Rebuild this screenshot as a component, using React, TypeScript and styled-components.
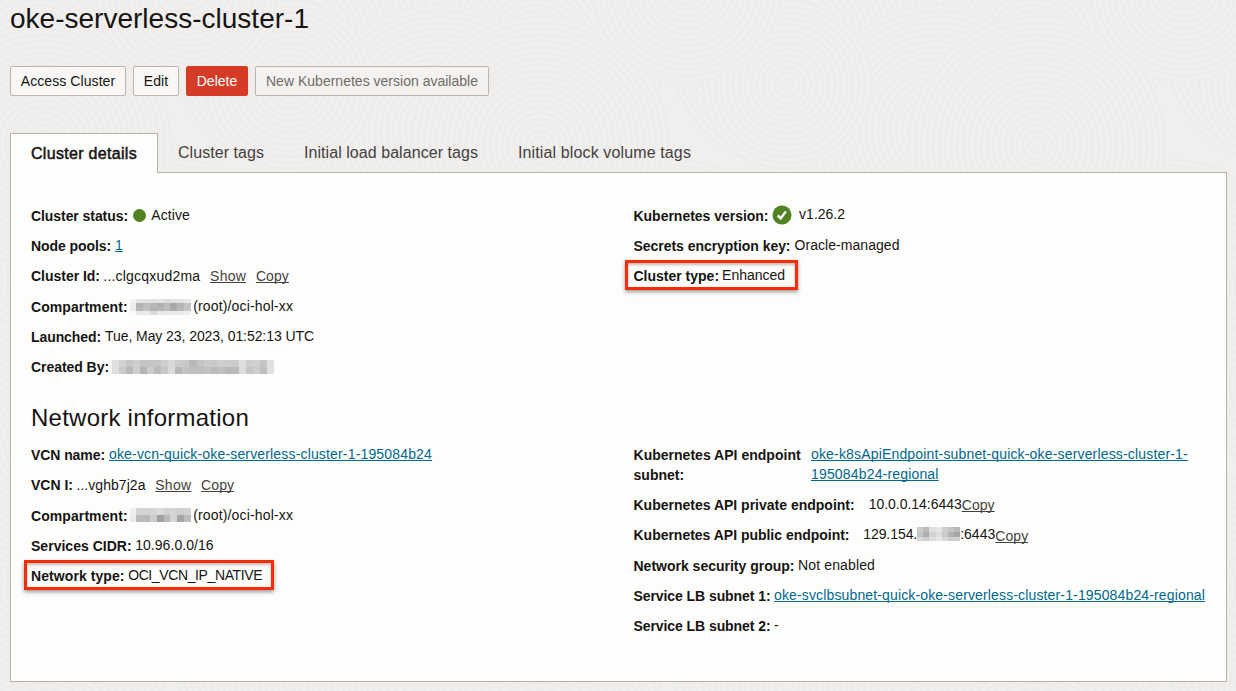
import React from 'react';
import styled, { createGlobalStyle } from 'styled-components';

const GlobalStyle = createGlobalStyle`
  * { box-sizing: border-box; }
  body {
    margin: 0;
    background: #f0efee;
    color: #161513;
    font-family: "Liberation Sans", Arial, Helvetica, sans-serif;
    font-size: 14px;
    line-height: 20px;
    overflow: hidden;
  }
`;

const Page = styled.main`
  position: relative;
  height: 691px;
  padding: 0 9px 0 10px;
  display: flex;
  flex-direction: column;
`;

const Backdrop = styled.svg`
  position: absolute;
  inset: 0;
  z-index: -1;
`;

const Title = styled.h1`
  margin: 3px 0 31px;
  font-size: 28px;
  line-height: 32px;
  font-weight: 400;
  letter-spacing: 0.01px;
`;

const Toolbar = styled.div`
  display: flex;
  gap: 7px;
  height: 30px;
`;

const Button = styled.button<{ $tone?: 'danger' | 'muted'; $width: number; $track?: number }>`
  width: ${(p) => p.$width}px;
  height: 30px;
  padding: 0;
  border-radius: 2px;
  border: 1px solid ${(p) => (p.$tone === 'danger' ? '#d63b25' : '#bcb6b1')};
  background: ${(p) => (p.$tone === 'danger' ? '#d63b25' : p.$tone === 'muted' ? '#f3f2f1' : '#f8f7f6')};
  color: ${(p) => (p.$tone === 'danger' ? '#fff' : p.$tone === 'muted' ? '#716b67' : '#161513')};
  font: inherit;
  letter-spacing: ${(p) => p.$track ?? 0}px;
  white-space: nowrap;
`;

const Tabs = styled.nav`
  display: flex;
  height: 40px;
  margin-top: 37px;
  margin-bottom: -1px;
  z-index: 1;
`;

const Tab = styled.a<{ $active?: boolean; $track?: number }>`
  height: 40px;
  padding: 10px 20px 0;
  border: ${(p) => (p.$active ? '1px solid #b8b2ac' : '0')};
  border-bottom: 0;
  background: ${(p) => (p.$active ? '#fdfdfb' : 'transparent')};
  color: ${(p) => (p.$active ? '#161513' : '#45413e')};
  -webkit-text-stroke: ${(p) => (p.$active ? '0.5px #161513' : '0')};
  font-size: 16px;
  letter-spacing: ${(p) => p.$track ?? 0}px;
  white-space: nowrap;
`;

const Panel = styled.section`
  height: 510px;
  border: 1px solid #b8b2ac;
  background: #fdfdfb;
  padding: 33px 0 0 20px;
`;

const Columns = styled.div<{ $height: number }>`
  display: grid;
  grid-template-columns: 602.5px 1fr;
  height: ${(p) => p.$height}px;
`;

const Heading = styled.h2`
  margin: 0 0 13px;
  font-size: 24px;
  line-height: 28px;
  font-weight: 400;
  letter-spacing: 0.241px;
`;

const List = styled.div<{ $offset?: number }>`
  display: flex;
  flex-direction: column;
  gap: 10.2px;
  padding-top: ${(p) => p.$offset ?? 0}px;
`;

const Row = styled.div<{ $tall?: boolean }>`
  position: relative;
  display: flex;
  align-items: flex-start;
  height: ${(p) => (p.$tall ? 40 : 20)}px;
  white-space: nowrap;
`;

const Label = styled.span<{ $track?: number; $width?: number }>`
  font-weight: 700;
  letter-spacing: ${(p) => p.$track ?? 0}px;
  width: ${(p) => (p.$width ? `${p.$width}px` : 'auto')};
  white-space: ${(p) => (p.$width ? 'normal' : 'nowrap')};
`;

const Value = styled.span<{ $track?: number; $gap?: number; $lift?: number }>`
  margin-left: ${(p) => p.$gap ?? 3.5}px;
  margin-top: ${(p) => -(p.$lift ?? 1)}px;
  letter-spacing: ${(p) => p.$track ?? 0}px;
`;

const Link = styled.a<{ $track?: number; $width?: number; $gap?: number }>`
  color: #00688c;
  margin-top: -1px;
  margin-left: ${(p) => p.$gap ?? 4}px;
  text-decoration: underline;
  text-decoration-skip-ink: none;
  text-decoration-thickness: 1px;
  text-underline-offset: 1px;
  letter-spacing: ${(p) => p.$track ?? 0}px;
  width: ${(p) => (p.$width ? `${p.$width}px` : 'auto')};
  white-space: ${(p) => (p.$width ? 'normal' : 'nowrap')};
`;

const Action = styled.a<{ $gap?: number; $drop?: number; $track?: number }>`
  color: #45413e;
  margin-left: ${(p) => p.$gap ?? 9.8}px;
  margin-top: ${(p) => p.$drop ?? 0}px;
  text-decoration: underline;
  text-decoration-skip-ink: none;
  text-decoration-thickness: 1px;
  text-underline-offset: 1px;
  letter-spacing: ${(p) => p.$track ?? 0.08}px;
`;

const StatusDot = styled.span`
  width: 13px;
  height: 13px;
  margin: 3px 2px 0 5px;
  border-radius: 50%;
  background: #508223;
`;

const CheckIcon = styled.svg`
  margin: -1px 3px 0 3px;
  width: 20px;
  height: 20px;
`;

const Highlight = styled.div<{ $width: number; $left: number }>`
  position: absolute;
  left: ${(p) => p.$left}px;
  top: -6.4px;
  width: ${(p) => p.$width}px;
  height: 30px;
  border: 3px solid #fb2b05;
  box-shadow: 0 2px 4px rgba(0, 0, 0, 0.4), inset 0 2px 3px rgba(0, 0, 0, 0.25);
`;

const Mosaic = styled.div<{ $cols: number; $width: number; $height: number; $gap: number; $top: number }>`
  display: grid;
  grid-template-columns: repeat(${(p) => p.$cols}, 1fr);
  width: ${(p) => p.$width}px;
  height: ${(p) => p.$height}px;
  margin-left: ${(p) => p.$gap}px;
  margin-top: ${(p) => p.$top}px;
`;

const Cell = styled.i<{ $shade: number }>`
  background: rgb(${(p) => p.$shade}, ${(p) => p.$shade}, ${(p) => p.$shade});
`;

type RedactedProps = { rows: number[][]; width: number; height: number; gap: number; top: number };

function Redacted({ rows, width, height, gap, top }: RedactedProps) {
  return (
    <Mosaic $cols={rows[0].length} $width={width} $height={height} $gap={gap} $top={top}>
      {rows.flat().map((shade, i) => (
        <Cell key={i} $shade={shade} />
      ))}
    </Mosaic>
  );
}

const COMPARTMENT = [
  [243, 228, 226, 225, 228, 222, 226, 226, 232],
  [236, 178, 190, 184, 176, 187, 168, 180, 194],
  [236, 182, 194, 180, 180, 190, 172, 184, 198],
  [248, 232, 234, 218, 232, 232, 234, 236, 240],
];
const VCN_COMPARTMENT = [
  [238, 212, 210, 214, 218, 208, 212, 206, 211],
  [234, 188, 184, 205, 160, 184, 212, 166, 190],
];
const CREATOR = [
  [225, 209, 198, 207, 196, 197, 197, 207, 216, 204, 200, 184, 195, 202, 201, 206, 204, 203, 222, 207, 208, 197, 224],
  [222, 202, 184, 207, 181, 204, 187, 200, 220, 184, 196, 191, 190, 194, 186, 193, 185, 186, 220, 198, 205, 190, 224],
];
const ADDRESS = [
  [203, 188, 223, 230, 206, 196, 184],
  [197, 174, 211, 222, 202, 177, 166],
  [216, 207, 222, 230, 215, 205, 207],
];

/* Sand-garden texture: overlapping discs of evenly spaced rings, later discs covering earlier ones. */
const TILE = { width: 497, height: 300 };
const DISCS: [number, number, number][] = [
  [40, 45, 130],
  [300, 40, 130],
  [440, 130, 125],
  [180, 270, 110],
  [425, 280, 110],
  [43, 145, 128],
  [290, 85, 84],
  [190, -12, 94],
];

function RingTexture() {
  return (
    <Backdrop width="1236" height="691">
      <defs>
        <pattern id="rings" width={TILE.width} height={TILE.height} patternUnits="userSpaceOnUse">
          {DISCS.flatMap(([cx, cy, r], d) =>
            [-TILE.width, 0, TILE.width].flatMap((dx) =>
              [0, TILE.height].map((dy) => (
                <g key={`${d}/${dx}/${dy}`} fill="#f0efee" stroke="#ecebea" strokeWidth="1.6">
                  {Array.from({ length: Math.floor(r / 6) }, (_, k) => (
                    <circle key={k} cx={cx + dx} cy={cy + dy} r={r - k * 6} />
                  ))}
                </g>
              )),
            ),
          )}
        </pattern>
      </defs>
      <rect width="1236" height="691" fill="url(#rings)" />
    </Backdrop>
  );
}

export default function App() {
  return (
    <>
      <GlobalStyle />
      <Page>
        <RingTexture />
        <Title>oke-serverless-cluster-1</Title>
        <Toolbar>
          <Button $width={116} $track={0.08}>Access Cluster</Button>
          <Button $width={46} $track={0.09}>Edit</Button>
          <Button $width={62} $track={0.02} $tone="danger">Delete</Button>
          <Button $width={234} $track={0.01} $tone="muted">New Kubernetes version available</Button>
        </Toolbar>
        <Tabs>
          <Tab $active $track={0.308}>Cluster details</Tab>
          <Tab $track={0.052}>Cluster tags</Tab>
          <Tab $track={0.055}>Initial load balancer tags</Tab>
          <Tab $track={0.126}>Initial block volume tags</Tab>
        </Tabs>
        <Panel>
          <Columns $height={198}>
            <List>
              <Row>
                <Label $track={-0.069}>Cluster status:</Label>
                <StatusDot />
                <Value $gap={3.3} $track={0.063}>Active</Value>
              </Row>
              <Row>
                <Label $track={-0.081}>Node pools:</Label>
                <Link>1</Link>
              </Row>
              <Row>
                <Label $track={-0.021}>Cluster Id:</Label>
                <Value $gap={3.3} $track={0.202} $lift={0}>...clgcqxud2ma</Value>
                <Action $track={0.24}>Show</Action>
                <Action>Copy</Action>
              </Row>
              <Row>
                <Label $track={0.08}>Compartment:</Label>
                <Redacted rows={COMPARTMENT} width={61} height={16} gap={2} top={2} />
                <Value $track={0.15} $gap={2.6}>(root)/oci-hol-xx</Value>
              </Row>
              <Row>
                <Label $track={-0.087}>Launched:</Label>
                <Value $gap={4} $track={-0.07}>Tue, May 23, 2023, 01:52:13 UTC</Value>
              </Row>
              <Row>
                <Label $track={-0.054}>Created By:</Label>
                <Redacted rows={CREATOR} width={162} height={14} gap={3} top={3} />
              </Row>
            </List>
            <List>
              <Row>
                <Label $track={-0.02}>Kubernetes version:</Label>
                <CheckIcon viewBox="0 0 20 20">
                  <circle cx="10" cy="10" r="9.5" fill="#508223" />
                  <path d="M5.7 10.4 8.7 13.4 13.9 6.4" fill="none" stroke="#fff" strokeWidth="2.4" />
                </CheckIcon>
                <Value $gap={4.6} $lift={2}>v1.26.2</Value>
              </Row>
              <Row>
                <Label $track={-0.042}>Secrets encryption key:</Label>
                <Value $gap={4} $track={0.051}>Oracle-managed</Value>
              </Row>
              <Row>
                <Label>Cluster type:</Label>
                <Value $gap={3}>Enhanced</Value>
                <Highlight $width={173} $left={-8.5} />
              </Row>
            </List>
          </Columns>
          <Heading>Network information</Heading>
          <Columns $height={200}>
            <List $offset={0.3}>
              <Row>
                <Label $track={-0.076}>VCN name:</Label>
                <Link $track={0.164}>oke-vcn-quick-oke-serverless-cluster-1-195084b24</Link>
              </Row>
              <Row>
                <Label>VCN I:</Label>
                <Value $track={0.045} $lift={0}>...vghb7j2a</Value>
                <Action $track={0.24}>Show</Action>
                <Action>Copy</Action>
              </Row>
              <Row>
                <Label $track={0.08}>Compartment:</Label>
                <Redacted rows={VCN_COMPARTMENT} width={61} height={14} gap={2} top={2} />
                <Value $track={0.15} $gap={2.6}>(root)/oci-hol-xx</Value>
              </Row>
              <Row>
                <Label $track={0.02}>Services CIDR:</Label>
                <Value $track={0.05}>10.96.0.0/16</Value>
              </Row>
              <Row>
                <Label $track={0.08}>Network type:</Label>
                <Value $track={-0.386}>OCI_VCN_IP_NATIVE</Value>
                <Highlight $width={250} $left={-7} />
              </Row>
            </List>
            <List>
              <Row $tall>
                <Label $track={0.02} $width={173.5}>Kubernetes API endpoint subnet:</Label>
                <Link $track={0.168} $width={400}>
                  oke-k8sApiEndpoint-subnet-quick-oke-serverless-cluster-1-<br />195084b24-regional
                </Link>
              </Row>
              <Row>
                <Label>Kubernetes API private endpoint:</Label>
                <Value $gap={14} $track={-0.03}>10.0.0.14:6443</Value>
                <Action $gap={0}>Copy</Action>
              </Row>
              <Row>
                <Label $track={-0.016}>Kubernetes API public endpoint:</Label>
                <Value $gap={13.7} $track={-0.063}>129.154.</Value>
                <Redacted rows={ADDRESS} width={43} height={14} gap={0} top={2} />
                <Value $gap={0}>:6443</Value>
                <Action $gap={0} $drop={1}>Copy</Action>
              </Row>
              <Row>
                <Label>Network security group:</Label>
                <Value $track={0.135}>Not enabled</Value>
              </Row>
              <Row>
                <Label $track={-0.075}>Service LB subnet 1:</Label>
                <Link $gap={3.5} $track={0.142}>oke-svclbsubnet-quick-oke-serverless-cluster-1-195084b24-regional</Link>
              </Row>
              <Row>
                <Label $track={-0.075}>Service LB subnet 2:</Label>
                <Value>-</Value>
              </Row>
            </List>
          </Columns>
        </Panel>
      </Page>
    </>
  );
}
